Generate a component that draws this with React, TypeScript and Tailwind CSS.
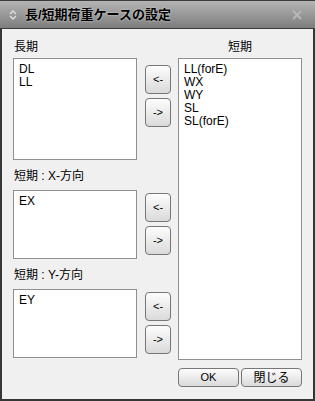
import React from 'react';

const font = { fontFamily: '"Liberation Sans", "Noto Sans CJK JP", sans-serif' };

const ListBox: React.FC<{ items: string[]; className?: string }> = ({ items, className }) => (
  <div className={`bg-white border border-[#8f8f8f] pl-[5px] pt-[4px] text-[12px] leading-[13px] text-black ${className ?? ''}`}>
    {items.map((it) => (
      <div key={it}>{it}</div>
    ))}
  </div>
);

const MoveButton: React.FC<{ label: string }> = ({ label }) => (
  <button className="w-[26px] h-[29px] rounded-[4px] border border-[#767676] bg-gradient-to-b from-[#fdfdfd] to-[#dadada] text-[11px] text-black flex items-center justify-center">
    {label}
  </button>
);

const Buttons: React.FC<{ top: string }> = ({ top }) => (
  <div className={`flex flex-col gap-[4px] ${top}`}>
    <MoveButton label="<-" />
    <MoveButton label="->" />
  </div>
);

export default function App() {
  return (
    <div style={font} className="w-[315px] h-[401px] flex flex-col bg-[#f0f0f0] border-x-2 border-b-2 border-[#363636] select-none">
      {/* Title bar */}
      <div className="h-[29px] -mx-[2px] flex items-center bg-gradient-to-b from-[#b4b4b4] to-[#7e7e7e] border-t border-b border-[#3c3c3c] shrink-0">
        <svg width="10" height="12" viewBox="0 0 10 12" className="ml-[8px]">
          <path d="M2 5 L5 2 L8 5" fill="none" stroke="#e0e0e0" strokeWidth="1.4" />
          <path d="M2 7 L5 10 L8 7" fill="none" stroke="#e0e0e0" strokeWidth="1.4" />
        </svg>
        <span className="ml-[7px] text-[13px] font-bold text-black [text-shadow:0_0_2px_#e8e8e8]">
          長/短期荷重ケースの設定
        </span>
        <svg width="14" height="12" viewBox="0 0 14 12" className="ml-auto mr-[11px]">
          <path d="M3 2 L11 10 M11 2 L3 10" stroke="#b8b8b8" strokeWidth="2" />
        </svg>
      </div>

      <div className="flex flex-1 pl-[11px]">
        {/* Left column */}
        <div className="flex flex-col">
          <div className="mt-[10px] h-[16px] text-[12px] leading-[16px] pl-[1px]">長期</div>
          <div className="flex mt-[3px]">
            <ListBox items={['DL', 'LL']} className="w-[124px] h-[102px]" />
            <Buttons top="ml-[8px] mt-[7px]" />
          </div>

          <div className="mt-[8px] h-[16px] text-[12px] leading-[16px] pl-[1px]">短期 : X-方向</div>
          <div className="flex mt-[6px]">
            <ListBox items={['EX']} className="w-[124px] h-[69px]" />
            <Buttons top="ml-[8px] mt-[3px]" />
          </div>

          <div className="mt-[8px] h-[16px] text-[12px] leading-[16px] pl-[1px]">短期 : Y-方向</div>
          <div className="flex mt-[6px]">
            <ListBox items={['EY']} className="w-[124px] h-[69px]" />
            <Buttons top="ml-[8px] mt-[3px]" />
          </div>
        </div>

        {/* Right column */}
        <div className="flex flex-col ml-[7px] w-[124px]">
          <div className="mt-[10px] h-[16px] text-[12px] leading-[16px] text-center">短期</div>
          <ListBox
            items={['LL(forE)', 'WX', 'WY', 'SL', 'SL(forE)']}
            className="mt-[3px] h-[302px]"
          />
          <div className="flex gap-[2px] mt-[8px]">
            <button className="w-[61px] h-[19px] rounded-[4px] border border-[#767676] bg-gradient-to-b from-[#fdfdfd] to-[#dadada] text-[11px] text-black">
              OK
            </button>
            <button className="w-[61px] h-[19px] rounded-[4px] border border-[#767676] bg-gradient-to-b from-[#fdfdfd] to-[#dadada] text-[12px] text-black">
              閉じる
            </button>
          </div>
        </div>
      </div>
    </div>
  );
}
